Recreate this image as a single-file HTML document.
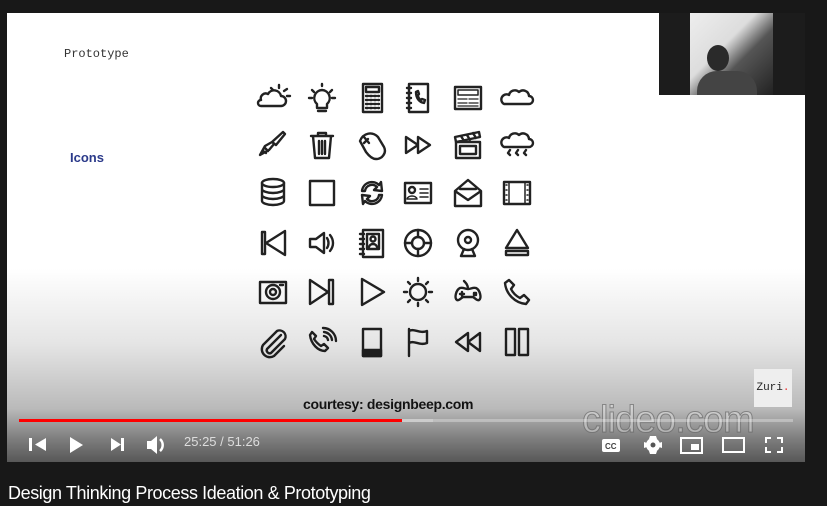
<!DOCTYPE html>
<html><head><meta charset="utf-8"><style>
html,body{margin:0;padding:0;background:#181818;width:827px;height:506px;overflow:hidden;font-family:"Liberation Sans",sans-serif}
#vid{position:absolute;left:7px;top:13px;width:798px;height:449px;background:#fff;overflow:hidden}
#shade{position:absolute;left:0;top:0;width:798px;height:449px;background:linear-gradient(to bottom,rgba(0,0,0,0) 0,rgba(0,0,0,0) 255px,rgba(0,0,0,0.1) 330px,rgba(0,0,0,0.27) 395px,rgba(0,0,0,0.5) 425px,rgba(0,0,0,0.66) 449px)}
.t{position:absolute;color:#222}
#cam{position:absolute;left:652px;top:0;width:146px;height:82px;background:#1c1c1c}
#title{position:absolute;left:8px;top:483px;color:#fff;font-size:18px;letter-spacing:-0.4px}
</style></head><body>
<div id="vid">
<div class="t" style="left:57px;top:34px;font-family:'Liberation Mono',monospace;font-size:12px;color:#333">Prototype</div>
<div class="t" style="left:63px;top:137px;font-size:13px;font-weight:bold;color:#2b3a8a">Icons</div>
<svg width="798" height="449" style="position:absolute;left:0;top:0" fill="none" stroke="#222" stroke-width="2.4" stroke-linecap="round" stroke-linejoin="round">
<g transform="translate(-7,-13)">
<g transform="translate(257,82)"><path d="M4 24h20a5 5 0 0 0 0-10a7 7 0 0 0-13-2a5 5 0 0 0-7 6a3 3 0 0 0 0 6z"/><path d="M22 6v-3M27 9l3-2M16 8l-2-2M30 14h3"/></g>
<g transform="translate(306,82)"><path d="M16 8a8 8 0 0 0-5 14v4h10v-4a8 8 0 0 0-5-14zM12 29h8M16 2v2M6 8l2 2M26 8l-2 2M3 16h3M29 16h-3"/></g>
<g transform="translate(356,82)"><rect x="7" y="2" width="19" height="28"/><rect x="10" y="5" width="13" height="5"/><path d="M10 14h13M10 18h13M10 22h13M10 26h13" stroke-dasharray="2 2"/></g>
<g transform="translate(402,82)"><rect x="7" y="2" width="19" height="28"/><path d="M5 6h4M5 11h4M5 16h4M5 21h4M5 26h4M14 10c0 6 3 10 8 11l1-3-3-1-1 1c-2-1-3-3-3-5l1-1-1-3z"/></g>
<g transform="translate(452,82)"><rect x="3" y="5" width="26" height="22"/><rect x="6" y="8" width="20" height="5" stroke-width="1.5"/><path d="M6 17h9M6 21h9M17 17h9M17 21h9M6 24h20" stroke-width="1.3"/></g>
<g transform="translate(501,82)"><path d="M3 22h25a4 4 0 0 0 0-8a6 6 0 0 0-10-4a6 6 0 0 0-10 3a4 4 0 0 0-5 9z"/></g>
<g transform="translate(257,129)"><path d="M26 3l2 2-9 11-4-3zM15 13l-7 4-5 9 9-5 5-6M6 22l3 2M8 19l3 3"/></g>
<g transform="translate(306,129)"><path d="M5 7h22M12 7V4h8v3M7 7l2 22h14l2-22M13 12v13M16 12v13M19 12v13"/></g>
<g transform="translate(356,129)"><path d="M4 12c3-8 12-10 18-4l6 10c3 6-2 12-8 12c-4 0-7-3-10-7z"/><path d="M8 8l5 6M12 10l-4 4"/></g>
<g transform="translate(402,129)"><path d="M4 8v16l12-8zM16 8v16l12-8z"/></g>
<g transform="translate(452,129)"><rect x="4" y="13" width="24" height="16"/><rect x="8" y="17" width="16" height="8"/><path d="M4 13l-1-5 24-5 1 5zM9 7l3 5M15 6l3 5M21 4l3 5"/></g>
<g transform="translate(501,129)"><path d="M3 18h25a4 4 0 0 0 0-8a6 6 0 0 0-10-4a6 6 0 0 0-10 3a4 4 0 0 0-5 9zM9 21l-2 3 2 2M17 21l-2 3 2 2M25 21l-2 3 2 2"/></g>
<g transform="translate(257,177)"><ellipse cx="16" cy="6" rx="11" ry="4"/><path d="M5 6v18c0 2 5 4 11 4s11-2 11-4V6M5 12c0 2 5 4 11 4s11-2 11-4M5 18c0 2 5 4 11 4s11-2 11-4"/></g>
<g transform="translate(306,177)"><rect x="4" y="4" width="24" height="24"/></g>
<g transform="translate(356,177)"><path d="M6 14a10 10 0 0 1 17-6l2-3 1 9-8-1 3-3a7 7 0 0 0-12 4zM26 18a10 10 0 0 1-17 6l-2 3-1-9 8 1-3 3a7 7 0 0 0 12-4z"/></g>
<g transform="translate(402,177)"><rect x="3" y="6" width="26" height="20"/><circle cx="10" cy="13" r="3"/><path d="M5 22c1-4 9-4 10 0zM18 12h8M18 16h8M18 20h8" stroke-width="1.5"/></g>
<g transform="translate(452,177)"><path d="M3 14v15h26V14L16 3zM3 14l13 9 13-9M8 12h16"/></g>
<g transform="translate(501,177)"><rect x="3" y="5" width="26" height="22"/><path d="M8 5v22M24 5v22M5 8h1M5 13h1M5 18h1M5 23h1M26 8h1M26 13h1M26 18h1M26 23h1" stroke-width="1.5"/></g>
<g transform="translate(257,227)"><path d="M5 5v22h3V5zM28 4L9 16l19 12z"/></g>
<g transform="translate(306,227)"><path d="M4 12h6l8-6v20l-8-6H4zM21 11c2 3 2 7 0 10M24 8c4 5 4 11 0 16"/></g>
<g transform="translate(356,227)"><rect x="7" y="3" width="20" height="27"/><path d="M4 7h4M4 12h4M4 17h4M4 22h4M4 27h4"/><rect x="11" y="7" width="12" height="15"/><circle cx="17" cy="12" r="2.5"/><path d="M13 20c1-4 7-4 8 0"/></g>
<g transform="translate(402,227)"><circle cx="16" cy="16" r="13"/><circle cx="16" cy="16" r="6"/><path d="M16 3v7M16 22v7M3 16h7M22 16h7"/></g>
<g transform="translate(452,227)"><circle cx="16" cy="13" r="10"/><circle cx="16" cy="13" r="3"/><path d="M12 22l-3 7h14l-3-7"/></g>
<g transform="translate(501,227)"><path d="M16 3L5 21h22zM5 24h22v4H5z"/></g>
<g transform="translate(257,276)"><rect x="3" y="6" width="26" height="21"/><circle cx="16" cy="16" r="7"/><circle cx="16" cy="16" r="3"/><path d="M23 9h3"/></g>
<g transform="translate(306,276)"><path d="M4 4v24l18-12zM23 4v24h4V4z"/></g>
<g transform="translate(356,276)"><path d="M6 3v26l22-13z"/></g>
<g transform="translate(402,276)"><circle cx="16" cy="16" r="8"/><path d="M16 2v3M16 27v3M2 16h3M27 16h3M6 6l2 2M24 24l2 2M26 6l-2 2M6 26l2-2"/></g>
<g transform="translate(452,276)"><path d="M5 24c-3-2-1-10 3-12c3-1 5 1 8 1s5-2 8-1c4 2 6 10 3 12c-2 1-4-2-6-3h-10c-2 1-4 4-6 3zM16 13c0-4-2-6-4-8M10 16v4M8 18h4M22 17h2v2h-2z"/></g>
<g transform="translate(501,276)"><path d="M8 4l5 5-3 4c2 4 5 7 9 9l4-3 5 5-3 4C14 27 5 18 4 7z"/></g>
<g transform="translate(257,326)"><path d="M24 9L10 23a3 3 0 0 0 4 4L28 13a6 6 0 0 0-8-8L6 19a8 8 0 0 0 11 11L27 20"/></g>
<g transform="translate(306,326)"><path d="M6 6l4 4-2 3c2 3 4 5 7 7l3-2 4 4-3 3C12 25 5 18 4 9zM18 6a9 9 0 0 1 8 8M18 10a5 5 0 0 1 4 4M17 2a13 13 0 0 1 13 13"/></g>
<g transform="translate(356,326)"><rect x="7" y="3" width="18" height="27"/><rect x="7" y="24" width="18" height="6" fill="#222"/></g>
<g transform="translate(402,326)"><path d="M7 3v27M7 5c6-3 10 3 18 0v12c-8 3-12-3-18 0"/></g>
<g transform="translate(452,326)"><path d="M4 16l12-9v18zM16 16l12-9v18z"/></g>
<g transform="translate(501,326)"><rect x="5" y="3" width="9" height="26"/><rect x="18" y="3" width="9" height="26"/></g>
</g>
</svg>
<div class="t" style="left:296px;top:383px;font-size:14px;font-weight:bold;color:#1a1a1a;letter-spacing:-0.3px">courtesy: designbeep.com</div>
<div id="cam"><div style="position:absolute;left:31px;top:0;width:83px;height:82px;background:linear-gradient(135deg,#eee 0,#ddd 40%,#555 60%,#222 100%)"></div><div style="position:absolute;left:48px;top:32px;width:22px;height:26px;border-radius:50%;background:#2a2a2a"></div><div style="position:absolute;left:38px;top:58px;width:60px;height:24px;border-radius:20px 20px 0 0;background:#444"></div></div>
<div id="shade"></div>
<div style="position:absolute;left:747px;top:356px;width:38px;height:38px;background:#eee;font-family:'Liberation Mono',monospace;font-size:11px;color:#222;line-height:38px;text-align:center">Zuri<span style="color:#e33">.</span></div>
<div style="position:absolute;left:575px;top:386px;font-size:38px;color:rgba(255,255,255,0.35);-webkit-text-stroke:1px rgba(90,90,90,0.6);letter-spacing:-1px">clideo.com</div>
<div style="position:absolute;left:12px;top:406px;width:774px;height:3px;background:rgba(255,255,255,0.3)"></div>
<div style="position:absolute;left:12px;top:406px;width:414px;height:3px;background:#ccc"></div>
<div style="position:absolute;left:12px;top:406px;width:383px;height:3px;background:#f00"></div>
<svg width="798" height="40" style="position:absolute;left:0;top:410px" fill="#fff">
<path d="M22 15h3v13h-3zM39 15v13l-11-6.5z"/>
<path d="M63 14v16l13-8z"/>
<path d="M104 15v13l10-6.5zM114 15h3v13h-3z"/>
<path d="M140 18h4l6-5v18l-6-5h-4z"/><path d="M153 16a8 8 0 0 1 0 12" stroke="#fff" stroke-width="2.5" fill="none"/>
<rect x="595" y="16" width="18" height="13" rx="2"/><text x="598" y="26" font-size="8" font-weight="bold" fill="#444" font-family="Liberation Sans">CC</text>
<circle cx="646" cy="22" r="7"/><circle cx="646" cy="22" r="2.5" fill="#555"/><path d="M643 13h6l1 3-8 0zM643 31h6l1-3-8 0zM637 19v6l3-1v-4zM655 19v6l-3-1v-4z"/>
<rect x="674" y="15" width="21" height="15" fill="none" stroke="#fff" stroke-width="2"/><rect x="684" y="21" width="8" height="6"/>
<rect x="716" y="15" width="21" height="14" fill="none" stroke="#fff" stroke-width="2"/>
<path d="M758 14h6v2h-4v4h-2zM770 14h6v6h-2v-4h-4zM758 24h2v4h4v2h-6zM776 24v6h-6v-2h4v-4z"/>
</svg>
<div style="position:absolute;left:177px;top:421px;font-size:13px;color:#ddd">25:25 / 51:26</div>
</div>
<div id="title">Design Thinking Process Ideation &amp; Prototyping</div>
</body></html>
